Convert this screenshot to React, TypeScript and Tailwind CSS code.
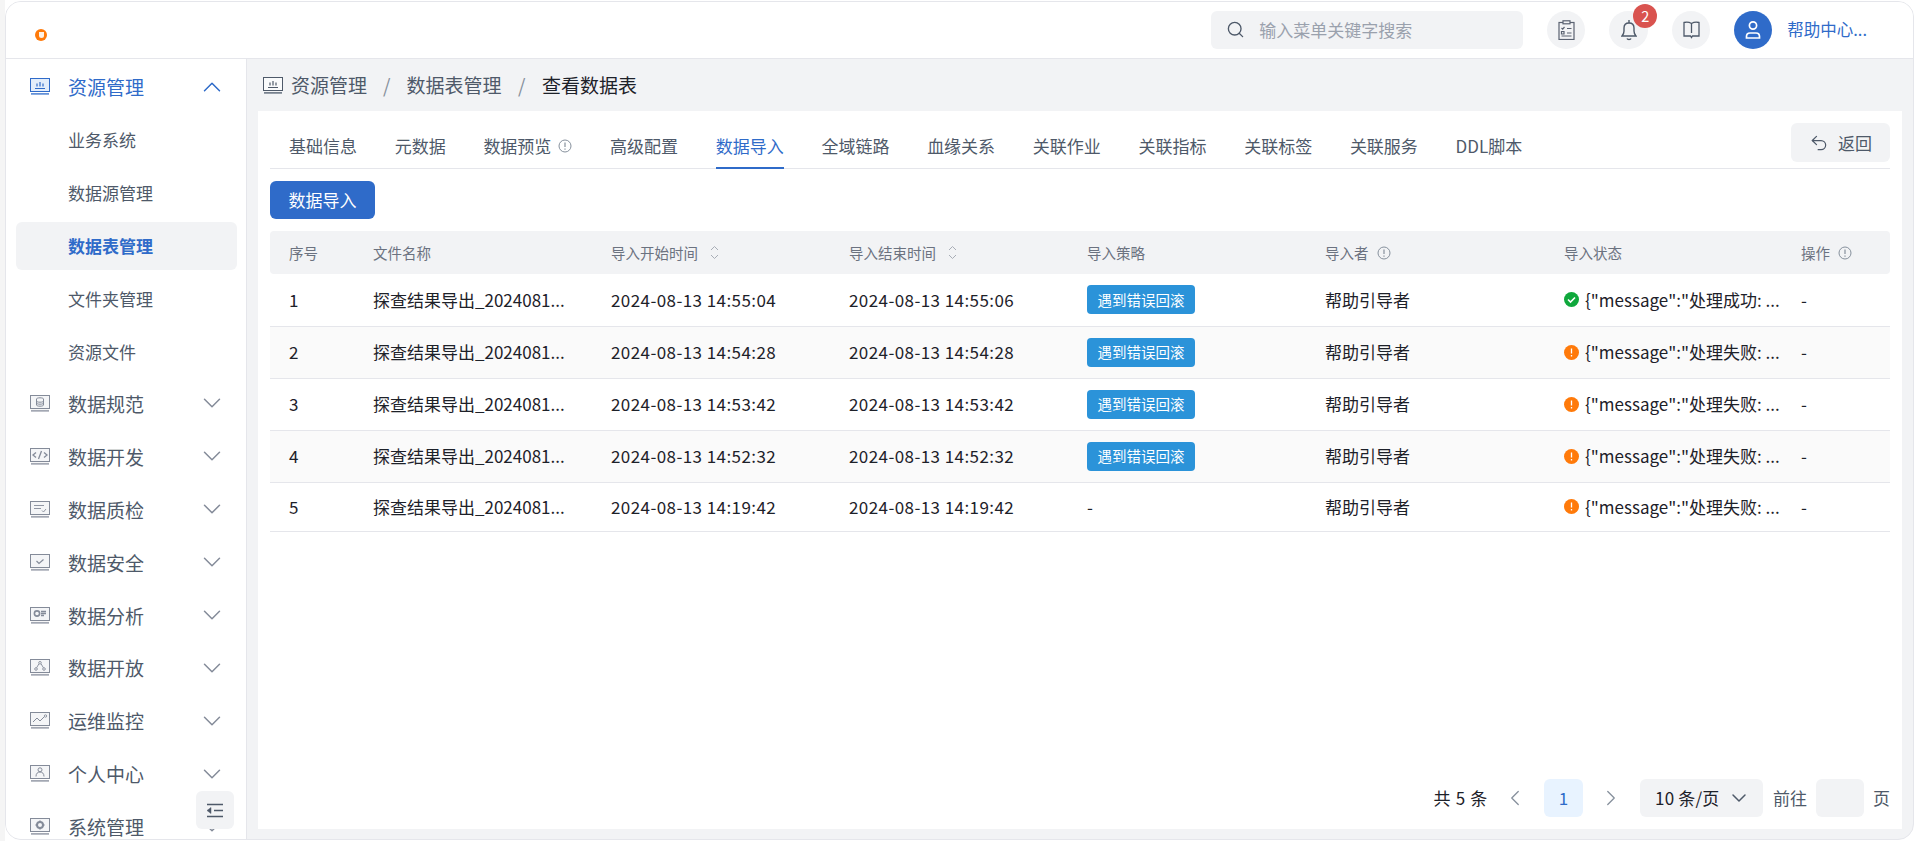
import React from "react";
import { ChevronDown, ChevronLeft, ChevronRight, ChevronUp, Search, Undo2 } from "lucide-react";

type MonitorProps = { color?: string; fill?: string; glyph: React.ReactNode; className?: string };

const MonitorIcon = ({ color = "#848b99", fill = "#f4f5f7", glyph, className = "" }: MonitorProps) => (
  <svg viewBox="0 0 20 17" className={`h-[17px] w-[20px] shrink-0 ${className}`} fill="none" stroke={color}>
    <rect x="0.5" y="0.5" width="19" height="13" fill={fill} strokeWidth="1" />
    <path d="M1 15.8h18" strokeWidth="1.8" opacity="0.75" />
    {glyph}
  </svg>
);

const crown = <path d="M5 10.5h10M10 4v4.5M7 5.5v3M13 5.5v3" strokeWidth="1.2" />;

const menuIcons: Record<string, React.ReactNode> = {
  数据规范: <path d="M6.5 4c0-1.6 7-1.6 7 0v6c0 1.6-7 1.6-7 0zM6.5 6c0 1.6 7 1.6 7 0M6.5 8c0 1.6 7 1.6 7 0" strokeWidth="1" />,
  数据开发: <path d="M6 4.5 3 7l3 2.5M14 4.5 17 7l-3 2.5M11.5 3 8.5 11" strokeWidth="1.3" />,
  数据质检: <path d="M4 4.5h10M4 7.5h7M12 9.5l1.5 1.5 2.5-3" strokeWidth="0.9" />,
  数据安全: <path d="m6.5 7 2.5 2.5 4.5-4" strokeWidth="1.2" />,
  数据分析: (
    <>
      <circle cx="7" cy="6.5" r="2.6" strokeWidth="1.6" />
      <path d="M11 4.5h5M11 6.5h5M11 8.5h3" strokeWidth="1.3" />
    </>
  ),
  数据开放: (
    <>
      <circle cx="10" cy="3.8" r="1.3" strokeWidth="0.9" />
      <circle cx="6" cy="10" r="1.3" strokeWidth="0.9" />
      <circle cx="14" cy="10" r="1.3" strokeWidth="0.9" />
      <path d="M8.8 5 6.6 8.8M11.2 5l2.2 3.8" strokeWidth="0.9" />
    </>
  ),
  运维监控: (
    <>
      <path d="m3 10 4-4 3 3 4-4" strokeWidth="1" />
      <circle cx="15.5" cy="4" r="1.2" strokeWidth="0.9" />
    </>
  ),
  个人中心: (
    <>
      <circle cx="10" cy="4.8" r="2" strokeWidth="1" />
      <path d="M6 11.5c0-3 1.6-4.5 4-4.5s4 1.5 4 4.5" strokeWidth="1" />
    </>
  ),
  系统管理: (
    <>
      <circle cx="10" cy="7" r="3" strokeWidth="2" />
      <path d="M10 2.5V4M10 10v1.500M5.500 7H7M13 7h1.500" strokeWidth="1.5" />
    </>
  ),
};

const subMenus = ["业务系统", "数据源管理", "数据表管理", "文件夹管理", "资源文件"];
const topMenus = ["数据规范", "数据开发", "数据质检", "数据安全", "数据分析", "数据开放", "运维监控", "个人中心", "系统管理"];
const tabs = ["基础信息", "元数据", "数据预览", "高级配置", "数据导入", "全域链路", "血缘关系", "关联作业", "关联指标", "关联标签", "关联服务", "DDL脚本"];

const rows = [
  { id: 1, start: "2024-08-13 14:55:04", end: "2024-08-13 14:55:06", tag: true, ok: true },
  { id: 2, start: "2024-08-13 14:54:28", end: "2024-08-13 14:54:28", tag: true, ok: false },
  { id: 3, start: "2024-08-13 14:53:42", end: "2024-08-13 14:53:42", tag: true, ok: false },
  { id: 4, start: "2024-08-13 14:52:32", end: "2024-08-13 14:52:32", tag: true, ok: false },
  { id: 5, start: "2024-08-13 14:19:42", end: "2024-08-13 14:19:42", tag: false, ok: false },
];

const InfoIcon = ({ size = 14 }: { size?: number }) => (
  <svg width={size} height={size} viewBox="0 0 14 14" fill="none" stroke="#86909c" strokeWidth="1" className="shrink-0">
    <circle cx="7" cy="7" r="6" />
    <path d="M7 3.5V8M7 9.5v1.200" strokeWidth="1.2" />
  </svg>
);

const SortIcon = () => (
  <svg width="9" height="15" viewBox="0 0 9 15" fill="none" stroke="#a8adb6" strokeWidth="1" className="shrink-0">
    <path d="m1 5 3.500-3.500L8 5M1 10l3.500 3.500L8 10" />
  </svg>
);

const StatusIcon = ({ ok }: { ok: boolean }) => (
  <svg width="15" height="15" viewBox="0 0 15 15" className="shrink-0">
    <circle cx="7.5" cy="7.5" r="7.5" fill={ok ? "#0fa83c" : "#ff7a0a"} />
    {ok ? (
      <path d="m4 7.500 2.500 2.500 4.500-4.500" fill="none" stroke="#fff" strokeWidth="1.6" />
    ) : (
      <path d="M7.500 3.500v5M7.500 10v1.500" fill="none" stroke="#fff" strokeWidth="1.3" />
    )}
  </svg>
);

const Sidebar = () => (
  <aside className="relative h-full w-[241px] shrink-0 overflow-hidden border-r border-[#e5e6eb] bg-white pt-[1px] text-[#4e5969]">
    <div className="flex h-[53px] items-center text-[19px] text-[#2f6bc9]">
      <MonitorIcon color="#2f6bc9" fill="#e3edfa" glyph={crown} className="ml-[24px]" />
      <span className="ml-[18px] flex-1 leading-none">资源管理</span>
      <ChevronUp size={30} className="mr-[19px]" strokeWidth={1.2} />
    </div>
    {subMenus.map((m) =>
      m === "数据表管理" ? (
        <div key={m} className="flex h-[53px] items-center py-[2.5px] pr-[9px] pl-[10px]">
          <div className="flex h-full w-full items-center rounded-[6px] bg-[#f2f3f5] pl-[52px] text-[17px] font-bold text-[#2f6bc9]">{m}</div>
        </div>
      ) : (
        <div key={m} className="flex h-[53px] items-center pl-[62px] text-[17px]">
          {m}
        </div>
      )
    )}
    <div className="mt-[-1px]">
      {topMenus.map((m) => (
        <div key={m} className="flex h-[52.9px] items-center text-[19px]">
          <MonitorIcon glyph={menuIcons[m]} className="ml-[24px]" />
          <span className="ml-[18px] flex-1 leading-none">{m}</span>
          <ChevronDown size={30} className="mr-[19px] text-[#848b99]" strokeWidth={1.2} />
        </div>
      ))}
    </div>
    <button className="absolute top-[732px] left-[190px] flex h-[38px] w-[38px] items-center justify-center rounded-[6px] bg-[#f2f3f5]">
      <svg width="18" height="15" viewBox="0 0 18 15" fill="none" stroke="#4e5969" strokeWidth="1.5">
        <path d="M1 1.500h16M8 7.500h9M1 13.500h16" />
        <path d="M5 4.500v6L1 7.500z" fill="#4e5969" strokeWidth="0.5" />
      </svg>
    </button>
  </aside>
);

const Header = () => (
  <header className="flex h-[57px] shrink-0 items-center border-b border-[#e5e6eb] bg-white pb-[1px]">
    <div className="mt-[11px] ml-[29px] flex h-[12px] w-[12px] items-center justify-center rounded-full bg-[#ff7a0a]">
      <div className="h-[6px] w-[5px] rounded-b-full bg-[#fff2e6]" />
    </div>
    <div className="ml-auto flex h-[38px] w-[312px] items-center rounded-[6px] bg-[#f2f3f5] pl-[15px] text-[17px] text-[#9aa1ad]">
      <Search size={19} className="text-[#4e5969]" strokeWidth={1.7} />
      <span className="ml-[14px]">输入菜单关键字搜索</span>
    </div>
    <div className="ml-[24px] flex h-[38px] w-[38px] items-center justify-center rounded-full bg-[#f2f3f5]">
      <svg width="17" height="20" viewBox="0 0 17 20" fill="none" stroke="#5a6271" strokeWidth="1.2">
        <rect x="1" y="2.500" width="15" height="17" />
        <rect x="5" y="0.800" width="7" height="3" fill="#f2f3f5" />
        <path d="m3.500 8 1.200 1.200L6.500 7M9 8.500h4.500M9 13h4.500M3.500 11.500h2.500v2.500H3.500zM3.500 16h10" />
      </svg>
    </div>
    <div className="relative ml-[24px] flex h-[38px] w-[39px] items-center justify-center rounded-full bg-[#f2f3f5]">
      <svg width="16" height="22" viewBox="0 0 16 22" fill="none" stroke="#4e5969" strokeWidth="1.4">
        <path d="M1 17c1.500-1.500 2-2.500 2-5V9c0-3 2-5 5-5s5 2 5 5v3c0 2.500.5 3.500 2 5z" />
        <path d="M8 1v3M6 19.500c.5 1.300 3.500 1.300 4 0" />
      </svg>
      <span className="absolute top-[-7px] left-[24px] flex h-[24px] w-[24px] items-center justify-center rounded-full bg-[#d9534f] text-[14.5px] text-white">2</span>
    </div>
    <div className="ml-[24px] flex h-[38px] w-[38px] items-center justify-center rounded-full bg-[#f2f3f5]">
      <svg width="17" height="18" viewBox="0 0 17 18" fill="none" stroke="#4e5969" strokeWidth="1.3">
        <path d="M1 1.500c2.500-.5 5-.5 7.500 1 2.500-1.500 5-1.500 7.500-1V15H9.500l-1 1.500-1-1.500H1zM8.500 2.500V12" />
      </svg>
    </div>
    <div className="ml-[24px] flex h-[38px] w-[38px] items-center justify-center rounded-full bg-[#2f6bc9]">
      <svg width="20" height="20" viewBox="0 0 20 20" fill="none" stroke="#fff" strokeWidth="1.7">
        <circle cx="10" cy="5.500" r="3.600" />
        <path d="M3.500 18v-1.500c0-2 1.500-3.500 3.500-3.500h6c2 0 3.500 1.500 3.500 3.500V18z" />
      </svg>
    </div>
    <span className="mr-[46px] ml-[15px] text-[16.5px] text-[#2f6bc9]">帮助中心...</span>
  </header>
);

const Breadcrumb = () => (
  <div className="flex h-[52px] shrink-0 items-center pl-[5px] text-[19px] text-[#4e5969]">
    <MonitorIcon color="#4e5969" fill="#f9fafb" glyph={crown} />
    <span className="ml-[8px]">资源管理</span>
    <span className="mx-[16px] text-[#86909c]">/</span>
    <span>数据表管理</span>
    <span className="mx-[16.5px] text-[#86909c]">/</span>
    <span className="text-[#1d2129]">查看数据表</span>
  </div>
);

const Tabs = () => (
  <div className="flex h-[58px] shrink-0 items-start border-b border-[#e5e6eb]">
    <div className="flex h-[57px] gap-[37.7px] pl-[19px] text-[17px] text-[#4e5969]">
      {tabs.map((t) => (
        <div key={t} className={`flex items-center pt-[13px] ${t === "数据导入" ? "h-[58px] border-b-2 border-[#2f6bc9] text-[#2f6bc9]" : ""}`}>
          {t}
          {t === "数据预览" && (
            <span className="ml-[7px]">
              <InfoIcon />
            </span>
          )}
        </div>
      ))}
    </div>
    <button className="mt-[12px] ml-auto flex h-[39px] w-[99px] items-center justify-center gap-[9px] rounded-[6px] bg-[#f2f3f5] text-[17px] text-[#4e5969]">
      <Undo2 size={20} strokeWidth={1.5} />
      返回
    </button>
  </div>
);

const DataTable = () => (
  <table className="mt-[12px] w-full table-fixed border-collapse text-left text-[17px] text-[#1d2129]">
    <colgroup>
      <col className="w-[84px]" />
      <col className="w-[238px]" />
      <col className="w-[238px]" />
      <col className="w-[238px]" />
      <col className="w-[238px]" />
      <col className="w-[239px]" />
      <col className="w-[237px]" />
      <col className="w-[108px]" />
    </colgroup>
    <thead>
      <tr className="h-[43px] bg-[#f2f3f5] text-[14.5px] font-normal text-[#6b7280]">
        <th className="rounded-l-[4px] pl-[19px] font-normal">序号</th>
        <th className="pl-[19px] font-normal">文件名称</th>
        <th className="pl-[19px] font-normal">
          <span className="flex items-center gap-[12px]">
            导入开始时间
            <SortIcon />
          </span>
        </th>
        <th className="pl-[19px] font-normal">
          <span className="flex items-center gap-[12px]">
            导入结束时间
            <SortIcon />
          </span>
        </th>
        <th className="pl-[19px] font-normal">导入策略</th>
        <th className="pl-[19px] font-normal">
          <span className="flex items-center gap-[8px]">
            导入者
            <InfoIcon />
          </span>
        </th>
        <th className="pl-[19px] font-normal">导入状态</th>
        <th className="rounded-r-[4px] pl-[19px] font-normal">
          <span className="flex items-center gap-[8px]">
            操作
            <InfoIcon />
          </span>
        </th>
      </tr>
    </thead>
    <tbody>
      {rows.map((r) => (
        <tr key={r.id} className={`border-b border-[#e5e6eb] ${r.tag ? "h-[52px]" : "h-[49.5px]"} ${r.id % 2 === 0 ? "bg-[#fafafa]" : "bg-white"}`}>
          <td className="pl-[19px]">{r.id}</td>
          <td className="pl-[19px]">探查结果导出_2024081...</td>
          <td className="pl-[19px] tracking-[0.42px]">{r.start}</td>
          <td className="pl-[19px] tracking-[0.42px]">{r.end}</td>
          <td className="pl-[19px]">
            {r.tag ? (
              <span className="flex h-[29px] w-[108px] items-center justify-center rounded-[4px] bg-[#2b93d9] text-[14.5px] text-white">遇到错误回滚</span>
            ) : (
              "-"
            )}
          </td>
          <td className="pl-[19px]">帮助引导者</td>
          <td className="pl-[19px]">
            <span className="flex items-center gap-[6px] whitespace-nowrap">
              <StatusIcon ok={r.ok} />
              {`{"message":"处理${r.ok ? "成功" : "失败"}: ...`}
            </span>
          </td>
          <td className="pl-[19px]">-</td>
        </tr>
      ))}
    </tbody>
  </table>
);

const Pagination = () => (
  <div className="mt-auto mb-[12px] flex h-[38px] items-center justify-end text-[17px] text-[#1d2129]">
    <span className="tracking-[0.7px]">共 5 条</span>
    <ChevronLeft size={26} className="ml-[14px] text-[#86909c]" strokeWidth={1.2} />
    <span className="ml-[16px] flex h-[38px] w-[39px] items-center justify-center rounded-[6px] bg-[#e8f3ff] text-[#2f6bc9]">1</span>
    <ChevronRight size={26} className="ml-[15px] text-[#86909c]" strokeWidth={1.2} />
    <div className="ml-[16px] flex h-[38px] w-[123px] items-center justify-between rounded-[6px] bg-[#f2f3f5] pr-[12px] pl-[15px] tracking-[0.2px]">
      10 条/页
      <ChevronDown size={24} className="text-[#4e5969]" strokeWidth={1.5} />
    </div>
    <span className="ml-[10px] text-[#4e5969]">前往</span>
    <div className="ml-[9px] h-[38px] w-[48px] rounded-[6px] bg-[#f2f3f5]" />
    <span className="ml-[9px] text-[#4e5969]">页</span>
  </div>
);

export default function App() {
  return (
    <div className="h-[841px] w-[1920px] border-l-[5px] border-[#f5f5f5] bg-white pt-[1px] pr-[6px] pb-[1px] font-['Noto_Sans_CJK_SC','Noto_Sans',sans-serif]">
      <div className="flex h-full flex-col overflow-hidden rounded-[16px] border border-[#e5e6eb] bg-[#f2f3f5]">
        <Header />
        <div className="flex min-h-0 flex-1">
          <Sidebar />
          <main className="flex min-w-0 flex-1 flex-col pr-[11px] pl-[11px]">
            <Breadcrumb />
            <section className="mb-[10px] flex min-h-0 flex-1 flex-col bg-white px-[12px]">
              <Tabs />
              <div className="mt-[12px]">
                <button className="flex h-[38px] w-[105px] items-center justify-center rounded-[6px] bg-[#2f6bc9] text-[17px] text-white">数据导入</button>
              </div>
              <DataTable />
              <Pagination />
            </section>
          </main>
        </div>
      </div>
    </div>
  );
}
